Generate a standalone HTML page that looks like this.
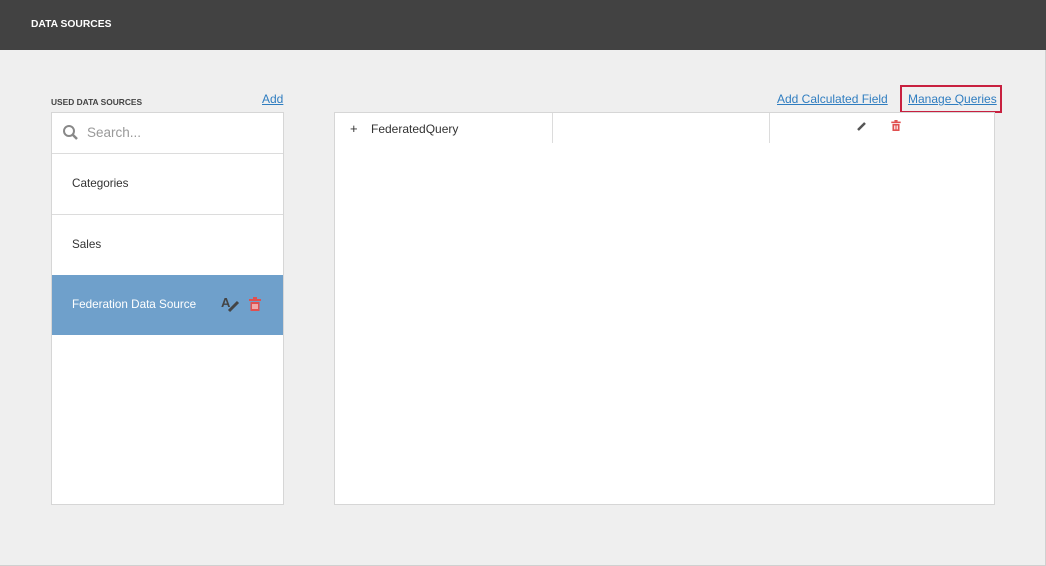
<!DOCTYPE html><html><head><style>
body{margin:0;width:1046px;height:566px;background:#efefef;font-family:"Liberation Sans",sans-serif;position:relative;overflow:hidden}
.hdr{position:absolute;left:0;top:0;width:1046px;height:50px;background:#424242;color:#fff;font-weight:bold;font-size:10.3px;line-height:50px;padding-left:31px;box-sizing:border-box}
.a{position:absolute;color:#2f7dc0;text-decoration:underline;font-size:12px}
.panel{position:absolute;background:#fff;border:1px solid #d6d6d6;box-sizing:border-box}
.row{position:absolute;left:0;width:231px;height:61px;border-top:1px solid #dcdcdc;font-size:11.7px;color:#333;line-height:60px;padding-left:20px;box-sizing:border-box}
</style></head><body>
<div class="hdr">DATA SOURCES</div>
<div style="position:absolute;left:51px;top:97px;font-size:8.4px;font-weight:bold;color:#444">USED DATA SOURCES</div>
<div class="a" style="left:262px;top:92px">Add</div>
<div class="panel" style="left:51px;top:112px;width:233px;height:393px">
<svg style="position:absolute;left:10px;top:11px" width="18" height="18" viewBox="0 0 18 18"><circle cx="7" cy="7" r="5" fill="none" stroke="#888" stroke-width="2"/><line x1="10.5" y1="10.5" x2="15" y2="15" stroke="#888" stroke-width="2.5"/></svg>
<div style="position:absolute;left:35px;top:12px;font-size:13.5px;color:#999">Search...</div>
<div class="row" style="top:40px">Categories</div>
<div class="row" style="top:101px">Sales</div>
<div class="row" style="top:162px;background:#6fa0cb;color:#fff;border-top:none;height:60px">Federation Data Source</div>
<div style="position:absolute;left:169px;top:182px;font-size:13px;font-weight:bold;color:#444">A</div>
<svg style="position:absolute;left:175px;top:186px" width="14" height="14" viewBox="0 0 14 14"><line x1="2" y1="12" x2="11" y2="3" stroke="#444" stroke-width="3"/></svg>
<svg style="position:absolute;left:197px;top:184px" width="12" height="14" viewBox="0 0 12 14"><rect x="0" y="2" width="12" height="2" fill="#e05050"/><rect x="4" y="0" width="4" height="2" fill="#e05050"/><path d="M1.5 5h9v9h-9z" fill="#e05050"/><path d="M4 7v5M6 7v5M8 7v5" stroke="#fff" stroke-width="1"/></svg>
</div>
<div class="a" style="left:777px;top:92px">Add Calculated Field</div>
<div style="position:absolute;left:900px;top:85px;width:102px;height:28px;border:2px solid #c8203f;box-sizing:border-box"></div>
<div class="a" style="left:908px;top:92px">Manage Queries</div>
<div class="panel" style="left:334px;top:112px;width:661px;height:393px">
<div style="position:absolute;left:15px;top:8px;font-size:13px;color:#333">+</div>
<div style="position:absolute;left:36px;top:9px;font-size:12px;color:#333">FederatedQuery</div>
<div style="position:absolute;left:217px;top:0;width:1px;height:30px;background:#dcdcdc"></div>
<div style="position:absolute;left:434px;top:0;width:1px;height:30px;background:#dcdcdc"></div>
<svg style="position:absolute;left:522px;top:8px" width="10" height="10" viewBox="0 0 10 10"><line x1="1" y1="9" x2="8" y2="2" stroke="#555" stroke-width="2.5"/></svg>
<svg style="position:absolute;left:556px;top:7px" width="10" height="11" viewBox="0 0 12 14"><rect x="0" y="2" width="12" height="2" fill="#e05050"/><rect x="4" y="0" width="4" height="2" fill="#e05050"/><path d="M1.5 5h9v9h-9z" fill="#e05050"/><path d="M4 7v5M6 7v5M8 7v5" stroke="#fff" stroke-width="1"/></svg>
</div>
<div style="position:absolute;left:1045px;top:50px;width:1px;height:516px;background:#d0d0d0"></div>
<div style="position:absolute;left:0;top:565px;width:1046px;height:1px;background:#d0d0d0"></div>
</body></html>
